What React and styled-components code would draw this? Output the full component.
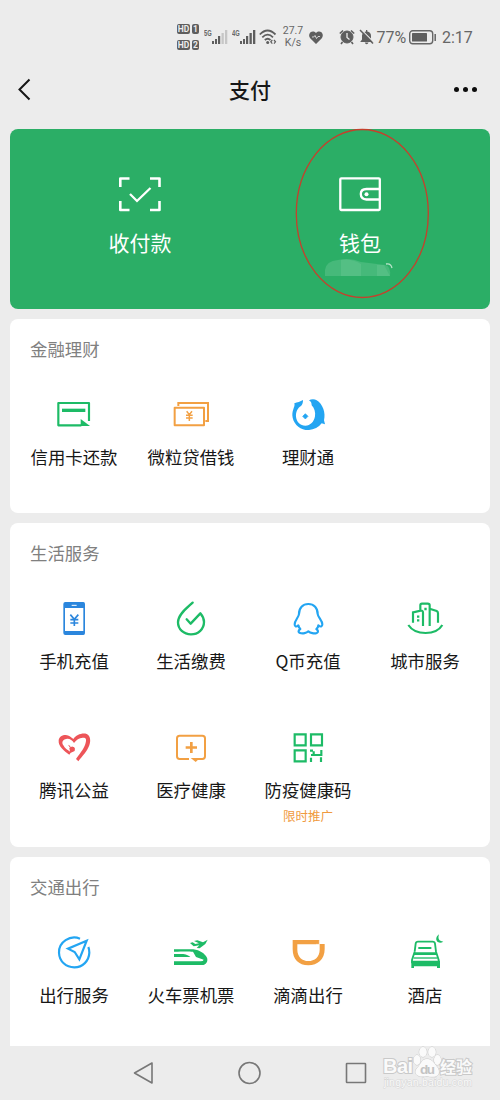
import React from "react";
import styled, { createGlobalStyle } from "styled-components";

const GREEN = "#1dbb66";
const ORANGE = "#f2a043";
const BLUE = "#23a5f2";

const GlobalStyle = createGlobalStyle`
  * { box-sizing: border-box; }
  body { margin: 0; background: #ececec; }
`;

const Screen = styled.div`
  position: relative;
  display: flex;
  flex-direction: column;
  width: 500px;
  height: 1100px;
  overflow: hidden;
  background: #ececec;
  color: #171717;
  font-family: "Noto Sans CJK SC", "Noto Sans", sans-serif;
  svg { display: block; flex: none; overflow: visible; }
`;

const StatusBar = styled.div`
  display: flex;
  flex: none;
  align-items: center;
  height: 74px;
  padding-left: 177px;
  color: #666;
  font-family: Roboto, sans-serif;
`;

const SimColumn = styled.div`
  display: flex;
  flex-direction: column;
  gap: 6px;
`;

const SimRow = styled.div`
  display: flex;
  gap: 2px;
`;

const Chip = styled.span`
  width: ${(p) => p.$w}px;
  height: 10px;
  border-radius: 2px;
  background: #5e5e5e;
  color: #ececec;
  font: bold 8.5px/10px Roboto, sans-serif;
  text-align: center;
`;

const Signal = styled.div`
  display: flex;
  align-items: flex-start;
  width: 24px;
  margin-left: ${(p) => p.$left}px;
`;

const SignalLabel = styled.span`
  width: 8px;
  font: bold 8px/8px "Liberation Sans", sans-serif;
  transform: scale(0.72, 1.15);
  transform-origin: 0 50%;
`;

const Speed = styled.div`
  width: 24px;
  margin-left: 4px;
  font-size: 10.5px;
  line-height: 12px;
  text-align: center;
`;

const StatusGlyph = styled.div`
  margin-left: ${(p) => p.$left}px;
`;

const StatusText = styled.span`
  width: 30px;
  margin-left: ${(p) => p.$left}px;
  padding-top: 2px;
  font-size: 16px;
  line-height: 20px;
  white-space: nowrap;
`;

const TitleBar = styled.header`
  display: grid;
  flex: none;
  grid-template-columns: 60px 1fr 60px;
  align-items: center;
  height: 30px;
  padding: 0 18px 0 14px;
`;

const PageTitle = styled.h1`
  margin: 0 0 0 4px;
  font-size: 21px;
  line-height: 30px;
  font-weight: 500;
  text-align: center;
`;

const MoreDots = styled.div`
  display: flex;
  justify-content: flex-end;
  gap: 4px;
  margin-right: 5.5px;
`;

const Dot = styled.i`
  width: 5px;
  height: 5px;
  border-radius: 50%;
  background: #0c0c0c;
`;

const Content = styled.main`
  display: flex;
  flex: none;
  flex-direction: column;
  gap: 10px;
  height: 917px;
  margin-top: 25px;
  padding: 0 10px;
  overflow: hidden;
`;

const PayPanel = styled.section`
  display: grid;
  grid-template-columns: 1fr 1fr;
  flex: none;
  height: 180px;
  padding: 43px 20px 0;
  border-radius: 8px;
  background: #2bae66;
  color: #fff;
`;

const PayAction = styled.div`
  display: flex;
  flex-direction: column;
  align-items: center;
  gap: 12px;
`;

const PayLabel = styled.span`
  font-size: 21px;
  line-height: 28px;
`;

const Card = styled.section`
  flex: none;
  height: ${(p) => p.$h}px;
  padding: 19px 6.5px 0 5.5px;
  border-radius: 8px;
  background: #fff;
`;

const CardTitle = styled.h2`
  margin: 0 0 35px 14.5px;
  color: #808080;
  font-size: 17.4px;
  line-height: 22px;
  font-weight: 400;
`;

const ServiceGrid = styled.div`
  display: grid;
  grid-template-columns: repeat(4, 117px);
  grid-auto-rows: 129px;
`;

const Service = styled.div`
  display: flex;
  flex-direction: column;
  align-items: center;
`;

const ServiceLabel = styled.span`
  margin-top: 10px;
  font-size: 17.4px;
  line-height: 24px;
  white-space: nowrap;
`;

const Promo = styled.span`
  margin-top: 6px;
  color: #f09a3e;
  font-size: 12.5px;
  line-height: 16px;
`;

const SystemNav = styled.nav`
  display: flex;
  flex: none;
  align-items: center;
  height: 54px;
  padding-left: 132px;
  gap: 85px;
`;

const MarkOverlay = styled.div`
  position: absolute;
  left: 295px;
  top: 128px;
`;

const Watermark = styled.div`
  position: absolute;
  left: 383px;
  top: 1044px;
`;

const Icon = ({ x, y, color, children }) => (
  <svg width="40" height="40" viewBox={`${x} ${y} 120 120`} fill="none" stroke={color} strokeWidth="6.5">
    {children}
  </svg>
);

const CreditCardIcon = () => (
  <Icon x={102} y={180} color={GREEN}>
    <path d="M184 271H115V204H207V258" strokeLinejoin="round" />
    <path d="M126 226H196" strokeWidth="10" />
    <path d="M182 252L210 273H182Z" fill={GREEN} stroke="none" />
  </Icon>
);

const LoanIcon = () => (
  <Icon x={453} y={180} color={ORANGE}>
    <path d="M464 218H552V271H464Z" strokeWidth="6" strokeLinejoin="round" />
    <path d="M475 213V204H564V258H556" strokeWidth="6" />
    <path d="M500 229L508 239L516 229M508 239V258M498 241H518M498 249H518" strokeWidth="4.5" />
  </Icon>
);

const WealthIcon = () => (
  <Icon x={144} y={15} color={BLUE}>
    <g fill={BLUE} stroke="none">
      <path d="M189 30C181 35 172 37 163 40C165 46 162 51 160 58C157 66 156 75 158 83C163 106 184 121 207 120C222 119 236 112 245 100L255 103L252 91C258 68 248 42 230 31C224 27 214 27 207 31C213 34 215 39 215 46C223 54 227 67 225 79C222 96 211 107 196 107C181 107 170 96 168 80C167 66 173 54 183 48C188 43 189 37 189 30Z" />
      <path d="M196 71L204 79L196 87L188 79Z" strokeLinejoin="round" stroke={BLUE} strokeWidth="2" />
    </g>
  </Icon>
);

const PhoneIcon = () => (
  <Icon x={102} y={27} color="#2b86dd">
    <path d="M136 36H190Q195 36 195 42V129Q195 135 190 135H136Q130 135 130 129V42Q130 36 136 36ZM135 54V123H190V54Z" fill="#2b86dd" fillRule="evenodd" stroke="none" />
    <path d="M155 46H170" stroke="#fff" strokeWidth="3" />
    <path d="M151 74L163 88L175 74M163 88V108M151 89H175M151 99H175" strokeWidth="5" />
  </Icon>
);

const BillsIcon = () => (
  <Icon x={453} y={27} color={GREEN}>
    <path d="M518 38C502 53 474 73 474 97C474 118 491 133 513 133C535 133 552 117 552 96C552 86 547 77 541 70L512 101L500 88" strokeWidth="7" strokeLinecap="round" strokeLinejoin="round" />
  </Icon>
);

const PenguinIcon = () => (
  <Icon x={114} y={27} color={BLUE}>
    <path d="M175 42C158 42 147 54 147 72C146 82 134 91 134 103C134 110 138 112 145 106C146 111 148 114 151 117C144 121 144 127 150 129C158 132 170 129 175 124C181 129 193 132 200 129C206 126 205 121 199 117C203 114 205 110 205 106C212 112 217 110 217 103C217 92 204 82 203 72C203 54 192 42 175 42Z" strokeLinejoin="round" />
  </Icon>
);

const CityIcon = () => (
  <Icon x={465} y={27} color={GREEN}>
    <path d="M475 105C496 137 558 137 577 105" />
    <path d="M489 98V67L512 62Q519 61 519 68V108M511 61V46Q511 41 516 41H533Q539 41 539 46V108M539 56L560 63Q564 65 564 70V98" />
    <path d="M501 80H508M501 91H508M523 57H530" strokeWidth="7" />
  </Icon>
);

const CharityIcon = () => (
  <Icon x={102} y={24} color="#ed5559">
    <path fill="#ed5559" stroke="none" d="M148 104C132 93 114 79 116 61C118 47 134 42 146 47C152 50 157 54 160 57C168 45 186 38 200 42C211 47 213 62 208 76C201 95 187 108 175 124L168 117C177 103 191 89 196 72C200 59 199 53 190 53C179 52 169 59 162 69C157 61 148 55 139 57C128 59 124 67 130 76C134 84 142 90 153 97Z" />
    <path d="M164 93L151 99L148 85C153 79 160 79 164 84ZM151 85L144 74L151 78Z" fill="#ed5559" stroke="none" />
    <circle cx="157" cy="87" r="7" fill="#ed5559" stroke="none" />
  </Icon>
);

const MedicalIcon = () => (
  <Icon x={453} y={24} color={ORANGE}>
    <path d="M507 117H479Q471 117 471 109V55Q471 47 479 47H547Q555 47 555 55V109Q555 117 547 117H526" strokeWidth="6" />
    <path d="M514 66V99M497 82.500H531" strokeWidth="8" />
    <path d="M512 114H540L527 126Z" fill={ORANGE} stroke="none" />
  </Icon>
);

const HealthCodeIcon = () => (
  <Icon x={114} y={24} color={GREEN}>
    <path d="M134 43H167V76H134ZM183 43H216V76H183ZM134 91H167V124H134ZM183 113V126M180 92H189M183 105H216M191 94V107M214 90V108M213 112V126" />
  </Icon>
);

const TravelIcon = () => (
  <Icon x={102} y={24} color={BLUE}>
    <path d="M180 41C150 29 116 51 117 83C118 109 138 127 163 127C188 127 207 108 208 83C208 76 207 71 205 66" />
    <path d="M200 47L144 71L164 81L178 103Z" />
  </Icon>
);

const TrainIcon = () => (
  <Icon x={453} y={24} color={GREEN}>
    <path d="M462 73H520C540 75 554 86 561 98C565 109 558 120 546 120H462V109H542Q550 109 551 104L528 96L519 80C507 79 492 79 462 80Z" fill={GREEN} stroke="none" />
    <path d="M462 87H490C501 89 506 92 511 96H462Z" fill={GREEN} stroke="none" />
    <path d="M510 54L518 52L526 57L537 55L522 48L532 46L549 52L563 44L556 57L539 70L530 69L538 61L521 64Z" fill={GREEN} stroke="none" />
  </Icon>
);

const DidiIcon = () => (
  <Icon x={114} y={24} color={ORANGE}>
    <path fill={ORANGE} stroke="none" fillRule="evenodd" d="M128 45H208V57H224V73C224 103 203 121 175 121C146 121 128 103 128 73ZM142 58V74C142 96 157 108 175 108C194 108 209 96 209 74V58Z" />
    <path d="M198 58H208V46" stroke="#fff" strokeWidth="1.5" />
  </Icon>
);

const HotelIcon = () => (
  <Icon x={465} y={24} color={GREEN}>
    <path d="M494 80L497 56Q498 50 504 50H548Q554 50 555 56L558 80L566 105V112H486V105L494 80" strokeWidth="5.5" />
    <path d="M507 69H542" strokeWidth="5.5" strokeLinecap="round" />
    <path d="M493 82H559L561 90H490Z" fill={GREEN} stroke="none" />
    <path d="M484 107H570V129H561V124H492V129H484Z" fill={GREEN} stroke="none" />
    <path d="M491 99H562" strokeWidth="4" />
    <path d="M567 28C560 33 556 42 561 49C566 55 574 54 580 50C566 49 563 40 567 28Z" fill={GREEN} stroke="none" />
  </Icon>
);

const SECTIONS = [
  {
    title: "金融理财", height: 194,
    items: [["信用卡还款", CreditCardIcon], ["微粒贷借钱", LoanIcon], ["理财通", WealthIcon]],
  },
  {
    title: "生活服务", height: 324,
    items: [
      ["手机充值", PhoneIcon], ["生活缴费", BillsIcon], ["Q币充值", PenguinIcon], ["城市服务", CityIcon],
      ["腾讯公益", CharityIcon], ["医疗健康", MedicalIcon], ["防疫健康码", HealthCodeIcon, "限时推广"],
    ],
  },
  {
    title: "交通出行", height: 220,
    items: [["出行服务", TravelIcon], ["火车票机票", TrainIcon], ["滴滴出行", DidiIcon], ["酒店", HotelIcon]],
  },
];

const SignalBars = ({ weak }) => (
  <svg width="16" height="15" fill="#5e5e5e">
    <rect x="0" y="11" width="2" height="3" />
    <rect x="3" y="9" width="2" height="5" />
    <rect x="6" y="6" width="2.200" height="8" />
    <rect x="9.500" y="3" width="2.300" height="11" fill={weak ? "#c6c6c6" : "#5e5e5e"} />
    <rect x="13" y="0" width="2.300" height="14" fill={weak ? "#c6c6c6" : "#5e5e5e"} />
  </svg>
);

const Status = () => (
  <StatusBar>
    <SimColumn>
      {["1", "2"].map((n) => (
        <SimRow key={n}><Chip $w={13}>HD</Chip><Chip $w={7}>{n}</Chip></SimRow>
      ))}
    </SimColumn>
    <Signal $left={5}><SignalLabel>5G</SignalLabel><SignalBars weak /></Signal>
    <Signal $left={4}><SignalLabel>4G</SignalLabel><SignalBars /></Signal>
    <StatusGlyph $left={3}>
      <svg width="18" height="16" fill="none" stroke="#5e5e5e" strokeWidth="1.8">
        <path d="M.8 5.500Q8.500-2.500 16.500 5.500M3.300 8.300Q8.700 3 14 8.300M5.800 11Q8.700 8.500 11.500 11" />
        <circle cx="8.700" cy="13.500" r="1.500" fill="#5e5e5e" stroke="none" />
        <path d="M13.300 11L11.800 12.800L13.300 14.600M15 11L16.500 12.800L15 14.600" strokeWidth="1.200" />
      </svg>
    </StatusGlyph>
    <Speed>27.7<br />K/s</Speed>
    <StatusGlyph $left={4}>
      <svg width="14" height="13">
        <path d="M7 13L1.200 7.200C-2 3 3-2 7 2C11-2 16 3 12.800 7.200Z" fill="#5e5e5e" />
        <path d="M3 6H4.800L6 4.500L7.500 7.500L9 5.500H11" fill="none" stroke="#ececec" strokeWidth=".8" />
      </svg>
    </StatusGlyph>
    <StatusGlyph $left={15.5}>
      <svg width="16" height="16" fill="none" stroke="#5e5e5e">
        <circle cx="8" cy="8" r="6" fill="#5e5e5e" />
        <path d="M.8 4.500L4 1.500M15.200 4.500L12 1.500M3.500 13L2 15M12.500 13L14 15" strokeWidth="1.600" />
        <path d="M8 4V8.500L10.500 10.500" stroke="#ececec" strokeWidth="1.300" />
      </svg>
    </StatusGlyph>
    <StatusGlyph $left={4}>
      <svg width="15" height="16">
        <path d="M1.200 13L3 10.500V6.500Q3.500 3 7 2.500V1H8.300V2.500Q12 3 12 7V10.500L14 13ZM5.800 13.500H9.500Q9 15.300 7.600 15.300Q6.200 15.300 5.800 13.500Z" fill="#5e5e5e" />
        <path d="M2.500 .8L15 13.300" stroke="#ececec" strokeWidth="1.200" />
        <path d="M1 1L14 14.500" stroke="#5e5e5e" strokeWidth="1.500" />
      </svg>
    </StatusGlyph>
    <StatusText $left={3}>77%</StatusText>
    <StatusGlyph $left={2}>
      <svg width="28" height="15">
        <rect x=".7" y=".8" width="23" height="13" rx="3" fill="none" stroke="#666" strokeWidth="1.400" />
        <rect x="3" y="3" width="15" height="8.500" rx=".6" fill="#5e5e5e" />
        <path d="M26.200 4V11" stroke="#666" strokeWidth="1.500" />
      </svg>
    </StatusGlyph>
    <StatusText $left={5.5}>2:17</StatusText>
  </StatusBar>
);

export default function App() {
  return (
    <Screen>
      <GlobalStyle />
      <Status />
      <TitleBar>
        <svg width="20" height="22" fill="none" stroke="#161616" strokeWidth="2">
          <path d="M15.500 1.500L5.500 11.500L15.500 21.500" />
        </svg>
        <PageTitle>支付</PageTitle>
        <MoreDots><Dot /><Dot /><Dot /></MoreDots>
      </TitleBar>
      <Content>
        <PayPanel>
          <PayAction>
            <svg width="44" height="44" fill="none" stroke="#fff" strokeWidth="2.600">
              <path d="M11.500 6.500H2.300V15M32 6.500H41.500V15M2.300 29V38H11.500M41.500 29V38H32" strokeLinejoin="round" />
              <path d="M12 22L19 29L32.500 16" strokeWidth="2.300" />
            </svg>
            <PayLabel>收付款</PayLabel>
          </PayAction>
          <PayAction>
            <svg width="44" height="44" fill="none" stroke="#fff" strokeWidth="2.300">
              <rect x="2.300" y="6.300" width="39.500" height="31.700" rx="1" />
              <path d="M41.500 17H28.500Q22.800 17 22.800 22T28.500 27.500H41.500" />
              <circle cx="28.500" cy="22.200" r="2" fill="#fff" stroke="none" />
            </svg>
            <PayLabel>钱包</PayLabel>
          </PayAction>
        </PayPanel>
        {SECTIONS.map(({ title, height, items }) => (
          <Card key={title} $h={height}>
            <CardTitle>{title}</CardTitle>
            <ServiceGrid>
              {items.map(([label, Glyph, promo]) => (
                <Service key={label}>
                  <Glyph />
                  <ServiceLabel>{label}</ServiceLabel>
                  {promo && <Promo>{promo}</Promo>}
                </Service>
              ))}
            </ServiceGrid>
          </Card>
        ))}
      </Content>
      <SystemNav>
        <svg width="22" height="24" fill="none" stroke="#777" strokeWidth="1.600">
          <path d="M20 2V22L2.500 12Z" strokeLinejoin="round" />
        </svg>
        <svg width="24" height="24" fill="none" stroke="#777" strokeWidth="1.600">
          <circle cx="10.500" cy="12" r="10.500" />
        </svg>
        <svg width="22" height="24" fill="none" stroke="#777" strokeWidth="1.600">
          <rect x="-1.500" y="2.500" width="19" height="19" rx=".5" />
        </svg>
      </SystemNav>
      <MarkOverlay>
        <svg width="135" height="172">
          <path d="M30 148V142Q31 133 43 132Q55 129 66 134L90 137Q96 138 95 148Z" fill="#46b97a" />
          <path d="M46 132Q56 130 66 136V148H46ZM82 137H89L95 148H82Z" fill="#54bf84" />
          <path d="M91 136Q96 135 97 140" fill="none" stroke="#b9e3c9" strokeWidth="1.300" />
          <ellipse cx="67.300" cy="85.500" rx="66" ry="84" fill="none" stroke="#c5402c" strokeWidth="1.300" />
        </svg>
      </MarkOverlay>
      <Watermark>
        <svg width="92" height="46" fill="#fafafa" stroke="#c9c9c9" strokeWidth="2" paintOrder="stroke" fontFamily="Liberation Sans, Noto Sans CJK SC, sans-serif">
          <text x="0" y="29" fontSize="20" fontWeight="bold" textLength="30">Bai</text>
          <ellipse cx="34" cy="16" rx="3.500" ry="5" strokeWidth="1" />
          <ellipse cx="40" cy="8" rx="3.800" ry="5" strokeWidth="1" />
          <ellipse cx="49" cy="8" rx="3.800" ry="5" strokeWidth="1" />
          <ellipse cx="54.500" cy="16" rx="3.500" ry="5" strokeWidth="1" />
          <path d="M44 15C50 15 52 21 55 24C59 33 50 34 44 32C37 34 29 31 34 24C38 21 38 15 44 15Z" strokeWidth="1" />
          <text x="37" y="30" fontSize="13.500" fontWeight="bold" fill="#c4c4c4" stroke="none" textLength="15">du</text>
          <text x="57" y="29" fontSize="16" fontWeight="bold" fontFamily="Noto Sans CJK SC, sans-serif" textLength="32">经验</text>
          <text x="1" y="42" fontSize="10.500" strokeWidth="1" stroke="#d6d6d6" textLength="88">jingyan.baidu.com</text>
        </svg>
      </Watermark>
    </Screen>
  );
}
